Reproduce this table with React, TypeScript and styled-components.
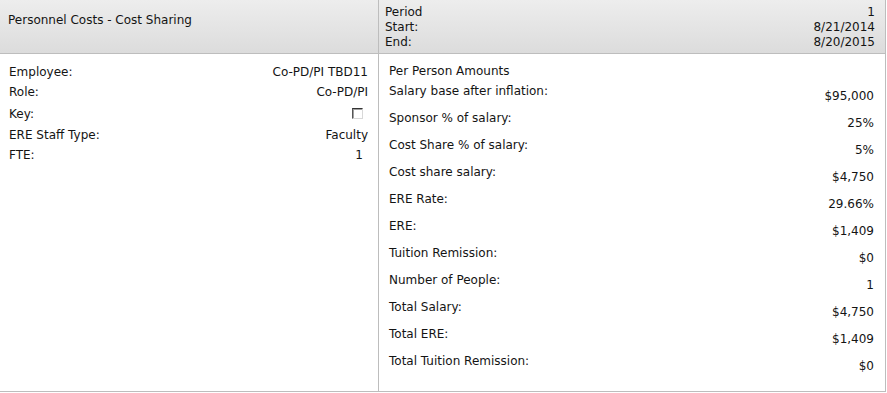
import React from "react";
import styled, { createGlobalStyle } from "styled-components";

const Global = createGlobalStyle`
  html, body { margin: 0; padding: 0; background: #ffffff; }
  body { font-family: "DejaVu Sans", Verdana, sans-serif; font-size: 12px; color: #141414; }
`;

const Panel = styled.div`
  width: 886px;
  height: 392px;
  display: grid;
  grid-template-columns: 378px 1px 1fr;
  grid-template-rows: 53px 1px 1fr;
  border-right: 1px solid #bdbdbd;
  border-bottom: 1px solid #bdbdbd;
  box-sizing: border-box;
`;

const HeaderCell = styled.div`
  background: linear-gradient(#ededed, #dcdcdc);
  box-sizing: border-box;
`;

const Title = styled.div`
  line-height: 20px;
  padding: 10px 0 0 8px;
`;

const VRule = styled.div`
  background: #bdbdbd;
  grid-row: 1 / 4;
  grid-column: 2;
`;

const HRule = styled.div<{ $col: string }>`
  background: #bdbdbd;
  grid-column: ${(p) => p.$col};
  grid-row: 2;
`;

const PeriodGrid = styled.div`
  display: grid;
  grid-template-columns: 1fr auto;
  line-height: 15px;
  padding: 5px 10px 0 6px;
`;

const Right = styled.span`
  text-align: right;
`;

const LeftBody = styled.div`
  grid-column: 1;
  grid-row: 3;
  padding: 8px 10px 0 9px;
`;

const InfoRow = styled.div<{ $h?: number }>`
  display: flex;
  justify-content: space-between;
  align-items: center;
  height: ${(p) => p.$h || 20}px;
  line-height: 20px;
`;

const InfoValue = styled.span<{ $inset?: number }>`
  padding-right: ${(p) => p.$inset || 0}px;
`;

const Check = styled.span`
  display: inline-block;
  width: 9px;
  height: 9px;
  margin-right: 5px;
  border-top: 1px solid #333;
  border-left: 1px solid #555;
  border-right: 1px solid #d8d8d8;
  border-bottom: 1px solid #d8d8d8;
  background: #fff;
  box-shadow: inset 1px 1px 0 #a0a0a0;
`;

const RightBody = styled.div`
  grid-column: 3;
  grid-row: 3;
  padding: 7px 11px 0 10px;
`;

const Section = styled.div`
  line-height: 20px;
`;

const AmountRow = styled.div`
  display: grid;
  grid-template-columns: 1fr auto;
  height: 27px;
  line-height: 20px;
`;

const AmountValue = styled.span`
  padding-top: 5px;
  text-align: right;
`;

const amounts: [string, string][] = [
  ["Salary base after inflation:", "$95,000"],
  ["Sponsor % of salary:", "25%"],
  ["Cost Share % of salary:", "5%"],
  ["Cost share salary:", "$4,750"],
  ["ERE Rate:", "29.66%"],
  ["ERE:", "$1,409"],
  ["Tuition Remission:", "$0"],
  ["Number of People:", "1"],
  ["Total Salary:", "$4,750"],
  ["Total ERE:", "$1,409"],
  ["Total Tuition Remission:", "$0"],
];

export default function App() {
  return (
    <>
      <Global />
      <Panel>
        <HeaderCell>
          <Title>Personnel Costs - Cost Sharing</Title>
        </HeaderCell>
        <VRule />
        <HeaderCell>
          <PeriodGrid>
            <span>Period</span>
            <Right>1</Right>
            <span>Start:</span>
            <Right>8/21/2014</Right>
            <span>End:</span>
            <Right>8/20/2015</Right>
          </PeriodGrid>
        </HeaderCell>
        <HRule $col="1" />
        <HRule $col="3" />
        <LeftBody>
          <InfoRow>
            <span>Employee:</span>
            <InfoValue>Co-PD/PI TBD11</InfoValue>
          </InfoRow>
          <InfoRow>
            <span>Role:</span>
            <InfoValue>Co-PD/PI</InfoValue>
          </InfoRow>
          <InfoRow $h={23}>
            <span>Key:</span>
            <Check />
          </InfoRow>
          <InfoRow>
            <span>ERE Staff Type:</span>
            <InfoValue>Faculty</InfoValue>
          </InfoRow>
          <InfoRow>
            <span>FTE:</span>
            <InfoValue $inset={5}>1</InfoValue>
          </InfoRow>
        </LeftBody>
        <RightBody>
          <Section>Per Person Amounts</Section>
          {amounts.map(([label, value]) => (
            <AmountRow key={label}>
              <span>{label}</span>
              <AmountValue>{value}</AmountValue>
            </AmountRow>
          ))}
        </RightBody>
      </Panel>
    </>
  );
}
